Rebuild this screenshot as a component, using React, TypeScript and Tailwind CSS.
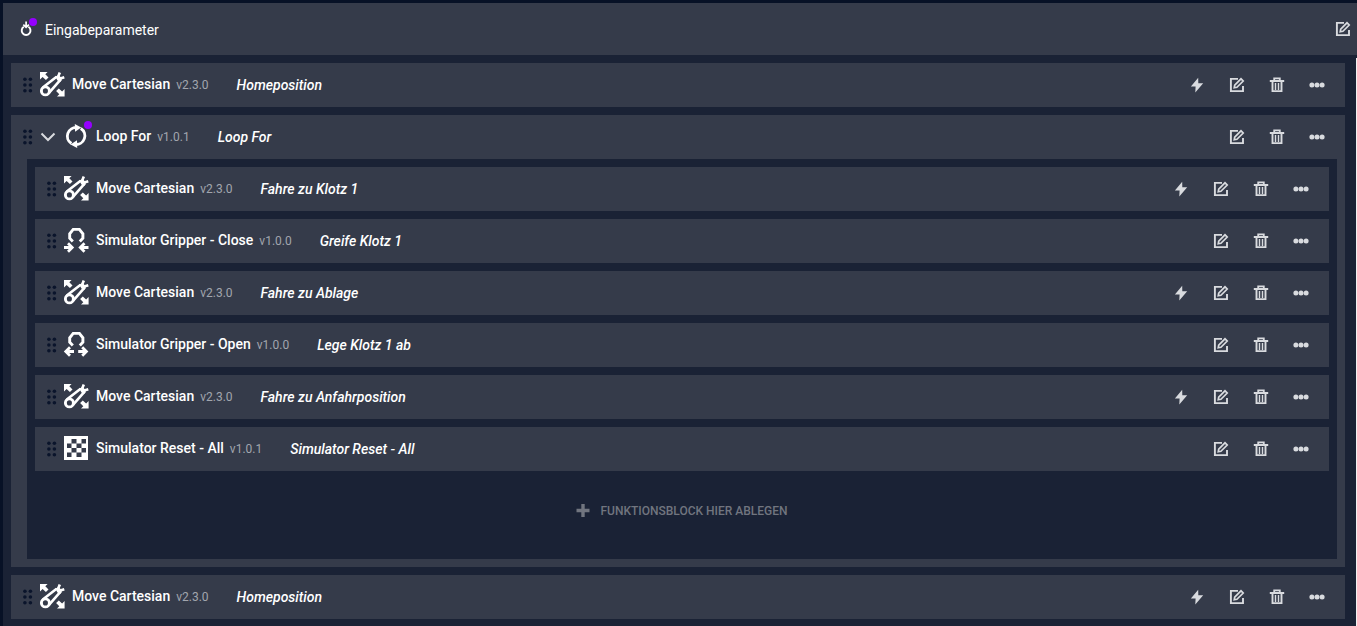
import React, { useState } from "react";
import type { ReactNode } from "react";

type IconName = "move" | "loop" | "close" | "open" | "reset";

interface Block {
	id: number;
	icon: IconName;
	title: string;
	version: string;
	label: string;
	runnable?: boolean;
	children?: Block[];
}

const blocks: Block[] = [
	{ id: 1, icon: "move", title: "Move Cartesian", version: "v2.3.0", label: "Homeposition", runnable: true },
	{
		id: 2,
		icon: "loop",
		title: "Loop For",
		version: "v1.0.1",
		label: "Loop For",
		children: [
			{ id: 3, icon: "move", title: "Move Cartesian", version: "v2.3.0", label: "Fahre zu Klotz 1", runnable: true },
			{ id: 4, icon: "close", title: "Simulator Gripper - Close", version: "v1.0.0", label: "Greife Klotz 1" },
			{ id: 5, icon: "move", title: "Move Cartesian", version: "v2.3.0", label: "Fahre zu Ablage", runnable: true },
			{ id: 6, icon: "open", title: "Simulator Gripper - Open", version: "v1.0.0", label: "Lege Klotz 1 ab" },
			{ id: 7, icon: "move", title: "Move Cartesian", version: "v2.3.0", label: "Fahre zu Anfahrposition", runnable: true },
			{ id: 8, icon: "reset", title: "Simulator Reset - All", version: "v1.0.1", label: "Simulator Reset - All" },
		],
	},
	{ id: 9, icon: "move", title: "Move Cartesian", version: "v2.3.0", label: "Homeposition", runnable: true },
];

const gripperHead = "M8.8 13.4L5.7 10.2V5.8L9.2 1.4h6.2L18.9 5.8v4.4l-3.1 3.2";

const blockIcons: Record<IconName, ReactNode> = {
	move: (
		<svg viewBox="0 0 24 24" className="h-6 w-6 shrink-0 overflow-visible" fill="none" stroke="white">
			<path d="M0 0h7.6L5.3 2.3l3.2 3.2-2.6 2.6-3.3-3.2L0 7.6z" fill="white" stroke="none" />
			<path d="M24.6 24.6H17l2.3-2.3-3.2-3.2 2.7-2.7 3.3 3.2 2.5-2.5z" fill="white" stroke="none" />
			<circle cx="5.4" cy="18.9" r="4" strokeWidth="2.9" />
			<path d="M2.8 15.6L16.6 4.8M9 20.8L20.8 7.4" strokeWidth="2.6" />
			<path d="M15.4 4.6L18.6 3l3.6 3.4-1.6 3.4-3.2-1.2z" fill="white" stroke="none" />
			<path d="M17.8 5.5l2-5M19.5 6.7l4.8-1.5" strokeWidth="2.6" />
		</svg>
	),
	loop: (
		<svg viewBox="0 0 24 24" className="h-6 w-6 shrink-0" fill="none" stroke="white">
			<path d="M7.4 19.6A8.7 8.7 0 0 1 13 3.6" strokeWidth="2.9" />
			<path d="M16.8 4.4A8.7 8.7 0 0 1 11.2 20.4" strokeWidth="2.9" />
			<path d="M10.8 0l6.4 3.5-6.1 4.2z" fill="white" stroke="none" />
			<path d="M13.2 24l-6.7-3.5 6.5-4.2z" fill="white" stroke="none" />
		</svg>
	),
	close: (
		<svg viewBox="0 0 24 24" className="h-6 w-6 shrink-0 overflow-visible" fill="none" stroke="white">
			<path d={gripperHead} strokeWidth="2.9" />
			<path d="M0 19.5h8M4 15.3l4.2 4.2L4 23.7M24.5 19.5h-8M20.5 15.3l-4.2 4.2 4.2 4.2" strokeWidth="2.8" />
		</svg>
	),
	open: (
		<svg viewBox="0 0 24 24" className="h-6 w-6 shrink-0 overflow-visible" fill="none" stroke="white">
			<path d={gripperHead} strokeWidth="2.9" />
			<path d="M10 19.5H2M6 15.3l-4.2 4.2L6 23.7M14.2 19.5h8M18.2 15.3l4.2 4.2-4.2 4.2" strokeWidth="2.8" />
		</svg>
	),
	reset: (
		<svg viewBox="0 0 24 24" className="h-6 w-6 shrink-0">
			<path d="M0 0h24v24H0z" fill="white" />
			<path
				d="M7.5 3h5v4.5h-5zM17.5 3h4.5v4.5h-4.5zM3 7.5h4.5V12H3zM12.5 7.5h5V12h-5zM7.5 12h5v4.5h-5zM17.5 12h4.5v4.5h-4.5zM3 16.5h4.5V21H3zM12.5 16.5h5V21h-5z"
				fill="#353b4a"
			/>
		</svg>
	),
};

const EditIcon = () => (
	<svg viewBox="0 0 16 16" className="h-4 w-4" fill="none" stroke="currentColor">
		<path d="M9 1.9H1.9v12.2H14V9" strokeWidth="1.9" />
		<path d="M5.2 10.8l.5-2.7 6.3-6.3 2.2 2.2-6.3 6.3z" strokeWidth="1.7" />
	</svg>
);

const TrashIcon = () => (
	<svg viewBox="0 0 16 16" className="h-4 w-4" fill="none" stroke="currentColor">
		<path d="M0.8 4h14.4M5.2 3.7V1.4h5.6v2.3" strokeWidth="1.8" />
		<path d="M3.5 4.5v9.6h9V4.5" strokeWidth="1.9" />
		<path d="M6.5 6v7M9.5 6v7" strokeWidth="1.4" />
	</svg>
);

const BoltIcon = () => (
	<svg viewBox="0 0 16 16" className="h-4 w-4" fill="currentColor">
		<path d="M9.2 0.8L1.9 9.5h4.7L6.3 15.4 14.2 6.3H9.3z" />
	</svg>
);

const MoreIcon = () => (
	<svg viewBox="0 0 16 16" className="h-4 w-4" fill="currentColor">
		<circle cx="2.9" cy="8" r="2.5" />
		<circle cx="8" cy="8" r="2.5" />
		<circle cx="13.1" cy="8" r="2.5" />
	</svg>
);

const DragHandle = () => (
	<svg viewBox="0 0 10 16" className="h-4 w-2.5 shrink-0 cursor-grab" fill="#0a142b">
		{[1.9, 7.4].map((x) => [2.2, 8, 13.8].map((y) => <circle key={`${x}-${y}`} cx={x} cy={y} r="1.8" />))}
	</svg>
);

const IconButton = ({ label, children }: { label: string; children: ReactNode }) => (
	<button type="button" aria-label={label} className="flex h-10 w-10 items-center justify-center text-[#d9dbdf] hover:text-white">
		{children}
	</button>
);

const BlockRow = ({ block }: { block: Block }) => {
	const [isOpen, setIsOpen] = useState<boolean>(true);

	return (
		<section className="bg-[#353b4a]">
			<div className="flex h-11 items-center pr-2 pl-3">
				<DragHandle />
				{block.children && (
					<button
						type="button"
						aria-label="Auf- und zuklappen"
						aria-expanded={isOpen}
						onClick={() => setIsOpen((prev) => !prev)}
						className="ml-[3px] flex h-6 w-6 items-center justify-center text-[#d9dbdf]"
					>
						<svg viewBox="0 0 16 16" className="h-4 w-4" fill="none" stroke="currentColor" strokeWidth="2">
							<path d="M1.5 4.5L8 11l6.5-6.5" />
						</svg>
					</button>
				)}
				<div className={`relative shrink-0 pb-0.5 ${block.children ? "ml-1" : "ml-[7px]"}`}>
					{blockIcons[block.icon]}
					{block.children && <span className="absolute -top-[3px] -right-1 h-2 w-2 rounded-full bg-[#9500ff]" />}
				</div>
				<h2 className="ml-2 flex items-baseline gap-1.5 pb-0.5 text-sm font-medium whitespace-nowrap text-white">
					{block.title}
					<span className="text-xs font-normal text-[#a2a6ae]">{block.version}</span>
				</h2>
				<em className="ml-7 text-sm font-medium whitespace-nowrap text-white">{block.label}</em>
				<div className="ml-auto flex">
					{block.runnable && (
						<IconButton label="Ausführen">
							<BoltIcon />
						</IconButton>
					)}
					<IconButton label="Bearbeiten">
						<EditIcon />
					</IconButton>
					<IconButton label="Löschen">
						<TrashIcon />
					</IconButton>
					<IconButton label="Mehr">
						<MoreIcon />
					</IconButton>
				</div>
			</div>
			{block.children && isOpen && (
				<div className="pr-2 pb-2 pl-4">
					<div className="flex flex-col gap-2 bg-[#1a2235] px-2 pt-2 pb-4">
						{block.children.map((child) => (
							<BlockRow key={child.id} block={child} />
						))}
						<button type="button" className="flex h-16 items-center justify-center gap-2.5 text-xs font-medium text-[#71757f]">
							<svg viewBox="0 0 14 14" className="h-3.5 w-3.5" stroke="currentColor" strokeWidth="3.4">
								<path d="M7 0v13M0.5 6.5h13" />
							</svg>
							FUNKTIONSBLOCK HIER ABLEGEN
						</button>
					</div>
				</div>
			)}
		</section>
	);
};

const App: React.FC = () => {
	return (
		<div className="min-h-screen bg-[#071126] pt-[3px] pl-[3px] font-['Roboto',sans-serif]">
			<header className="flex h-[52px] items-center bg-[#353b4a] pl-4">
				<div className="relative flex h-4 w-4 items-center justify-center">
					<svg viewBox="0 0 16 16" className="h-4 w-4" fill="none" stroke="white">
						<path d="M4.8 5.8a4.4 4.4 0 1 0 4.6 0" strokeWidth="1.9" />
						<path d="M7.1 0.5v5M4.3 3.6l2.8 2.8 2.8-2.8" strokeWidth="1.7" />
					</svg>
					<span className="absolute -top-[3px] -right-0.5 h-2 w-2 rounded-full bg-[#9500ff]" />
				</div>
				<h1 className="ml-2.5 pt-0.5 text-sm text-white">Eingabeparameter</h1>
				<div className="-mr-1.5 ml-auto">
					<IconButton label="Bearbeiten">
						<EditIcon />
					</IconButton>
				</div>
			</header>
			<div className="flex min-h-[calc(100vh-55px)] bg-[#1a2235]">
				<main className="flex flex-1 flex-col gap-2 pt-2 pr-[11px] pl-2">
					{blocks.map((block) => (
						<BlockRow key={block.id} block={block} />
					))}
				</main>
				{/* edge of the scroll track */}
				<div className="mt-[3px] w-px bg-[#f1f1f1]" />
			</div>
		</div>
	);
};

export default App;
